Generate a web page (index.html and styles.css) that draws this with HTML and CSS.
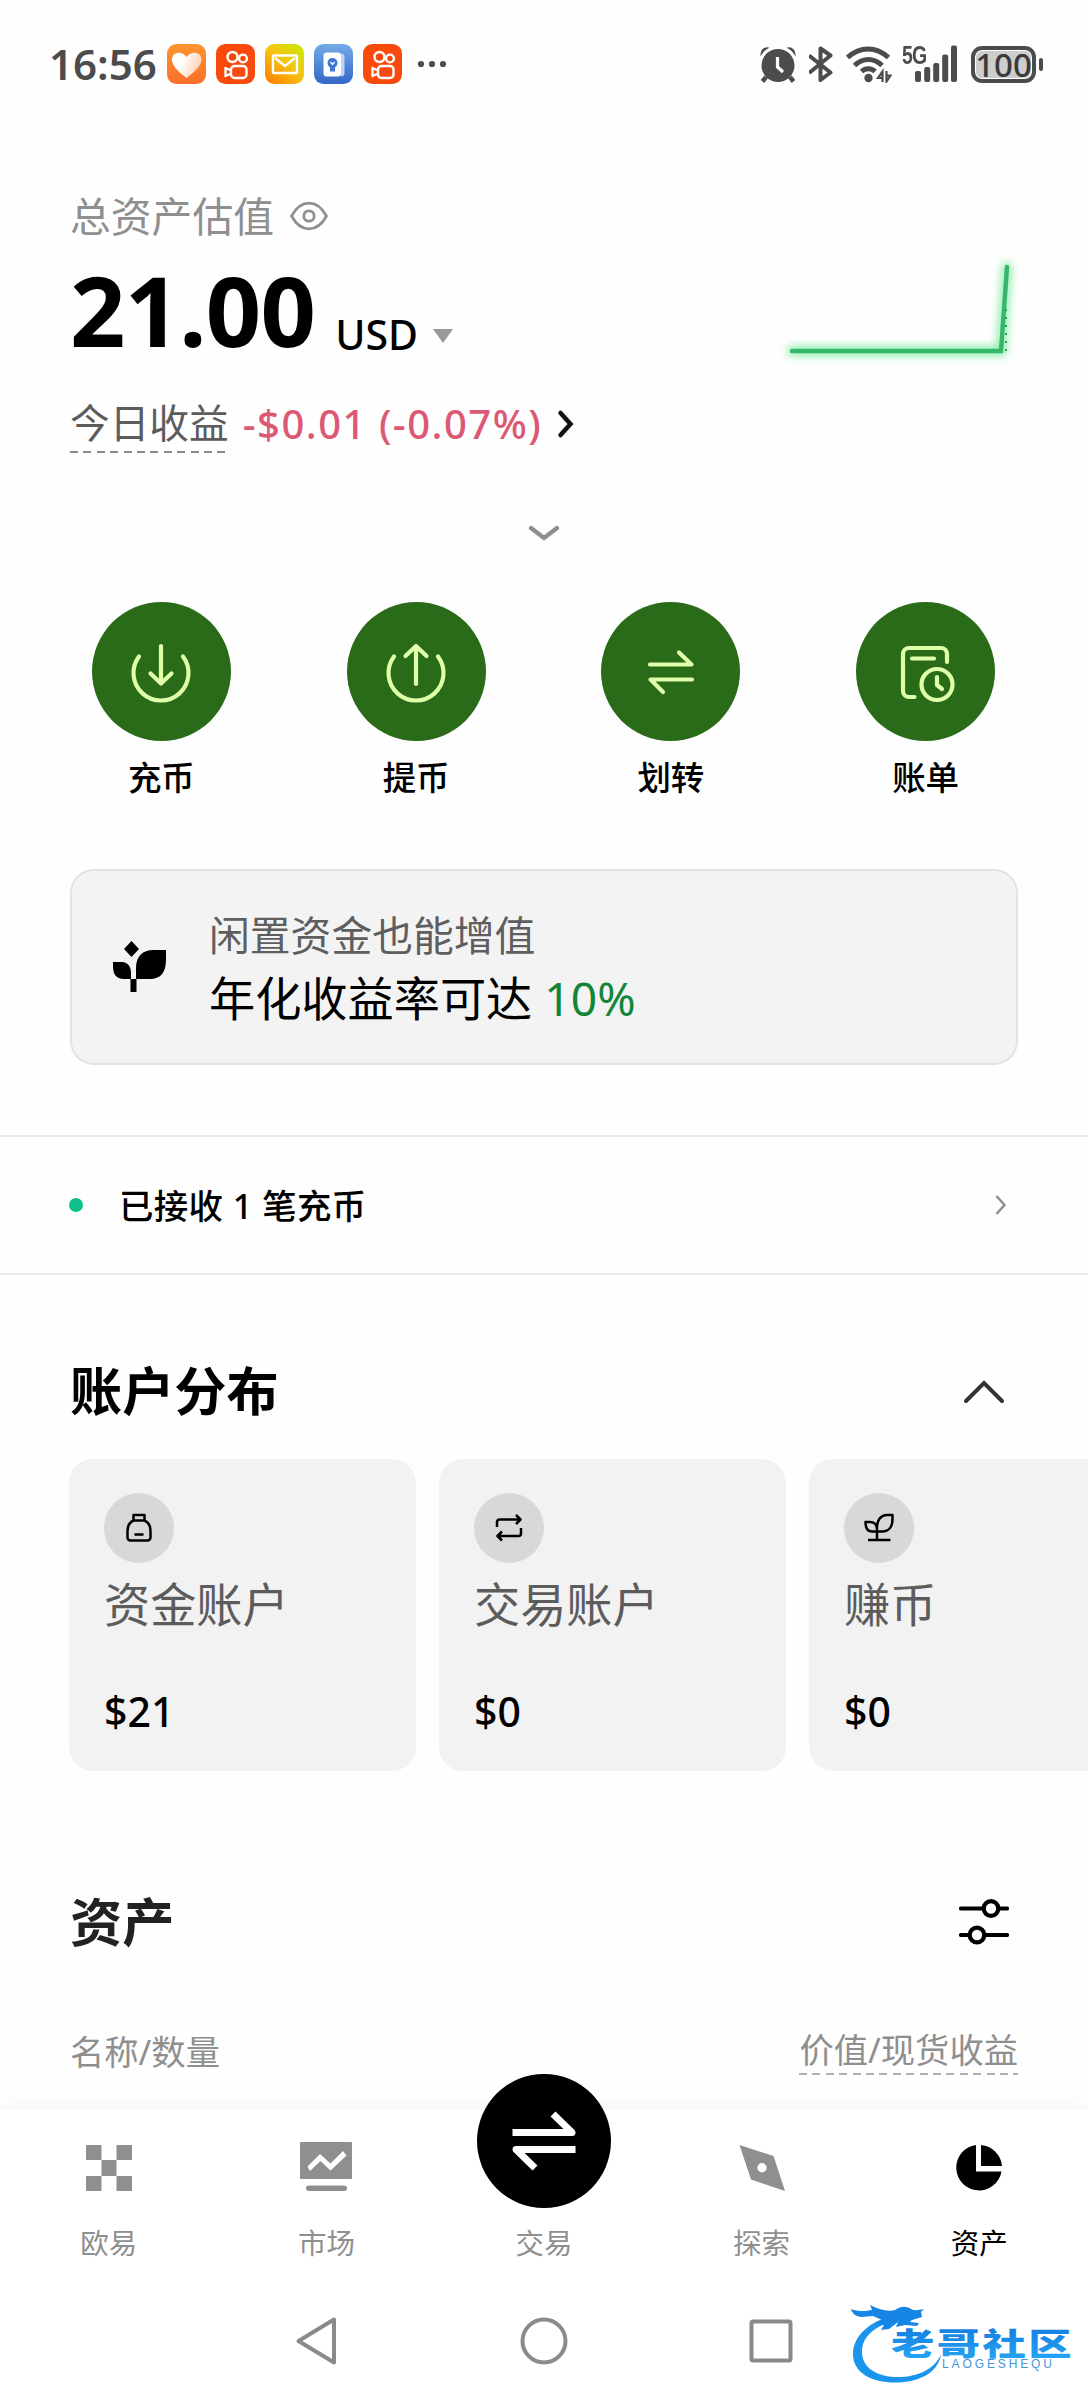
FILE: index.html
```html
<!DOCTYPE html>
<html lang="zh-CN">
<head>
<meta charset="utf-8">
<title>资产</title>
<link rel="stylesheet" href="styles.css">
</head>
<body>
<svg width="0" height="0" class="defs">
  <defs>
    <linearGradient id="gHeart" x1="0" y1="0" x2="0" y2="1"><stop offset="0" stop-color="#ff9430"/><stop offset="1" stop-color="#f9702a"/></linearGradient>
    <linearGradient id="gMail" x1="1" y1="0" x2="0.2" y2="1"><stop offset="0" stop-color="#c8ea00"/><stop offset="0.5" stop-color="#f5c614"/><stop offset="1" stop-color="#ff8400"/></linearGradient>
    <linearGradient id="gBook" x1="0" y1="0" x2="0" y2="1"><stop offset="0" stop-color="#74aae8"/><stop offset="1" stop-color="#3267c8"/></linearGradient>
    <linearGradient id="gLogo" x1="0" y1="0" x2="0" y2="1"><stop offset="0" stop-color="#1273dc"/><stop offset="1" stop-color="#27a9f5"/></linearGradient>
    <linearGradient id="gPetal" x1="0" y1="0" x2="1" y2="0.4"><stop offset="0.4" stop-color="#fff"/><stop offset="1" stop-color="#ffd3b5"/></linearGradient>
    <g id="kwai">
      <rect width="39" height="40" rx="9.500" fill="#f84a0c"/>
      <g fill="none" stroke="#fff" stroke-width="2.400" stroke-linejoin="round">
        <circle cx="16.500" cy="13" r="5"/><circle cx="27" cy="14.500" r="3.900"/>
        <rect x="15" y="22" width="15.500" height="12" rx="3.500"/><path d="M15 26.500 9.500 24v8l5.500-2.500"/>
      </g>
    </g>
  </defs>
</svg>

<header class="status">
  <span class="clock">16:56</span>
  <div class="apps">
    <svg width="39" height="40" viewBox="0 0 39 40"><rect width="39" height="40" rx="9.500" fill="url(#gHeart)"/><path d="M19.500 34C13 29 5 22 5 15.500 5 8.500 14 6 19.500 13 25 6 34.500 8.500 34.500 15.500 34.500 22 26 29 19.500 34z" fill="url(#gPetal)"/></svg>
    <svg width="39" height="40" viewBox="0 0 39 40"><use href="#kwai"/></svg>
    <svg width="39" height="40" viewBox="0 0 39 40"><rect width="39" height="40" rx="9.500" fill="url(#gMail)"/><g fill="none" stroke="#fff" stroke-width="2.400"><rect x="8" y="11.500" width="24" height="17.500" rx="1"/><path d="m10 14 10 8 10-8"/></g></svg>
    <svg width="39" height="40" viewBox="0 0 39 40"><rect width="39" height="40" rx="9.500" fill="url(#gBook)"/><path d="M27 9.500a3 3 0 0 1 3.500 3v17a3 3 0 0 1-3.500 3z" fill="#bcd4f5"/><rect x="9.500" y="8.500" width="17.500" height="24" rx="3" fill="#fff"/><circle cx="18.500" cy="19" r="5" fill="#3f77d2"/><path d="M16 23h5v4.500h-5z" fill="#3f77d2"/><path d="m16.500 18 2 2.500 2-2.500" fill="none" stroke="#fff" stroke-width="1.300"/></svg>
    <svg width="39" height="40" viewBox="0 0 39 40"><use href="#kwai"/></svg>
  </div>
  <svg class="more" width="30" height="8" viewBox="0 0 30 8" fill="#4c4c4c"><circle cx="4" cy="4" r="3.100"/><circle cx="15" cy="4" r="3.100"/><circle cx="26" cy="4" r="3.100"/></svg>
  <div class="system">
    <svg width="36" height="38" viewBox="0 0 36 38"><circle cx="18" cy="20.500" r="16.500" fill="#4c4c4c"/><path d="m6 32-3.500 4.500M30 32l3.500 4.500" stroke="#4c4c4c" stroke-width="4.500"/><path d="M.5 11.500C0 4 5 1 9.500 2.800 5.500 4.500 3 7 .5 11.500zM35.500 11.500C36 4 31 1 26.500 2.800 30.500 4.500 33 7 35.500 11.500z" fill="#4c4c4c"/><path d="M17.500 12v10l5.500 5" fill="none" stroke="#fff" stroke-width="3.200"/></svg>
    <svg class="bt" width="24" height="38" viewBox="0 0 24 38" fill="none" stroke="#4c4c4c" stroke-width="4" stroke-linejoin="round"><path d="m0 10.500 21.500 17L11.500 35V3.500l10 7L0 28"/></svg>
    <svg class="wifi" width="46" height="38" viewBox="0 0 46 38" fill="none" stroke="#4c4c4c" stroke-width="5"><path d="M1.500 12.500C14 1 30 1 42.500 12.500M8.500 20.500C17 12.500 28 12.500 36 20.500M15.500 26.500C19.500 22.800 25.500 22.800 29 26.500"/><circle cx="22.500" cy="33" r="4.200" fill="#4c4c4c" stroke="none"/><path d="M36.500 37V26.500L32 33h4.500M40.500 26v10.500l4-6h-4" stroke-width="2.200"/></svg>
    <div class="signal">
      <span class="net">5G</span>
      <svg width="57" height="38" viewBox="0 0 57 38" fill="#4c4c4c"><rect x="13" y="26" width="6" height="11" rx="2"/><rect x="22.200" y="22" width="6" height="15" rx="2"/><rect x="31.200" y="18" width="6" height="19" rx="2"/><rect x="40.200" y="9.500" width="6" height="27.500" rx="2"/><rect x="49" y="0.500" width="6" height="36.500" rx="2"/></svg>
    </div>
    <div class="battery"><span class="cell">100</span><i class="nub"></i></div>
  </div>
</header>

<main class="page">
  <section class="hero">
    <div class="summary">
      <div class="hero-label">总资产估值
        <svg width="38" height="30" viewBox="0 0 38 30" fill="none" stroke="#8f8f8f" stroke-width="2.700"><path d="M1.500 15C11-2.200 27-2.200 36.500 15 27 32.200 11 32.200 1.500 15z" stroke-linejoin="round"/><circle cx="19" cy="15" r="5.200"/></svg>
      </div>
      <div class="balance"><strong>21.00</strong><span class="currency">USD</span><i class="caret"></i></div>
      <div class="pnl"><span class="dashed today">今日收益</span><span class="loss">-$0.01 (-0.07%)</span>
        <svg width="18" height="30" viewBox="0 0 18 30" fill="none" stroke="#111" stroke-width="4.500" stroke-linecap="round"><path d="m3.500 4 10 11-10 11"/></svg>
      </div>
    </div>
    <svg class="spark" width="248" height="130" viewBox="0 0 248 130" fill="none">
      <polyline class="glow" points="22,111 231,111 237,27" stroke="#79eb9d" stroke-width="10" stroke-linecap="round"/>
      <polyline points="22,111 231,111 237,27" stroke="#36b668" stroke-width="4.400" stroke-linecap="round"/>
      <path d="M236 69v42" stroke="#2f9e5b" stroke-width="2" stroke-dasharray="2 6"/>
    </svg>
  </section>

  <div class="expander"><svg width="34" height="20" viewBox="0 0 34 20" fill="none" stroke="#8f8f8f" stroke-width="4.400" stroke-linecap="round"><path d="m4 4 13 10L30 4"/></svg></div>

  <nav class="actions">
    <a class="action"><span class="disc"><svg width="64" height="64" viewBox="0 0 64 64"><path d="M10 16.500a27.500 27.500 0 1 0 44 0M32 6v37M21.500 33.500 32 43.500l10.500-10"/></svg></span>充币</a>
    <a class="action"><span class="disc"><svg width="64" height="64" viewBox="0 0 64 64"><path d="M10 16.500a27.500 27.500 0 1 0 44 0M32 44V6M21.500 16 32 6l10.500 10"/></svg></span>提币</a>
    <a class="action"><span class="disc"><svg width="64" height="64" viewBox="0 0 64 64"><path d="M11 24.500h41.500L40 12.500M53 39.500H11.500L24 52"/></svg></span>划转</a>
    <a class="action"><span class="disc"><svg width="64" height="64" viewBox="0 0 64 64"><path d="M20.500 57H15a6 6 0 0 1-6-6V14a6 6 0 0 1 6-6h32a6 6 0 0 1 6 6v8M18 18.500h22"/><circle cx="43" cy="44.500" r="15.500"/><path d="M43 37v8l5 4"/></svg></span>账单</a>
  </nav>

  <section class="earn">
    <svg width="54" height="52" viewBox="0 0 54 52"><path d="M0 21h9c6 0 9 5 9 11v6H11C3 38 0 33 0 25zM23 38V27c0-12 7-18 17-18h13v10c0 13-6 19-16 19zM17.500 38h6v13h-6z"/><path d="M18.500 0 26 8l-7.500 8L11 8z"/></svg>
    <div class="earn-text">
      <div class="earn-sub">闲置资金也能增值</div>
      <div class="earn-main">年化收益率可达 <em>10%</em></div>
    </div>
  </section>

  <a class="notice"><i class="dot"></i><span>已接收 1 笔充币</span><svg width="14" height="24" viewBox="0 0 14 24" fill="none" stroke="#8f8f8f" stroke-width="2.500"><path d="m2.500 3 8 9-8 9"/></svg></a>

  <section class="accounts">
    <div class="section-head"><h2>账户分布</h2><svg width="46" height="30" viewBox="0 0 46 30" fill="none" stroke="#333" stroke-width="4" stroke-linecap="round"><path d="M5 25 23 7l18 18"/></svg></div>
    <div class="cards">
      <article class="card"><span class="badge"><svg width="30" height="30" viewBox="0 0 30 30"><path d="M9.500 2h11v5.500h-11zM9.500 7.500C6 9 3.500 13 3.500 18v6.500a3 3 0 0 0 3 3h17a3 3 0 0 0 3-3V18c0-5-2.500-9-6-10.500M10.500 21.500h9"/></svg></span><h3>资金账户</h3><b>$21</b></article>
      <article class="card"><span class="badge"><svg width="30" height="30" viewBox="0 0 30 30"><path d="M3 14V9a2.500 2.500 0 0 1 2.500-2.500H26M22 2l4.500 4.500L22 11M27 15v5.500a2.500 2.500 0 0 1-2.500 2.500H4M8 18.500 3.500 23 8 27.500"/></svg></span><h3>交易账户</h3><b>$0</b></article>
      <article class="card"><span class="badge"><svg width="30" height="30" viewBox="0 0 30 30"><path d="M13 18.500V14c0-7 4-12 10-12h5.500v4c0 8-4 12.500-10 12.500zM13 18.500H8C3.500 18.500 1.500 15 1.500 9H6c4 0 7 2.500 7 7M13 18v9M4 27h22.500"/></svg></span><h3>赚币</h3><b>$0</b></article>
    </div>
  </section>

  <section class="assets">
    <div class="section-head assets-head"><h2>资产</h2><svg width="50" height="46" viewBox="0 0 50 46" fill="none" stroke="#000" stroke-width="4.200" stroke-linecap="round"><path d="M2 9.500h21M41 9.500h7M2 36h7M27 36h21"/><circle cx="32" cy="9.500" r="7.300"/><circle cx="18" cy="36" r="7.300"/></svg></div>
    <div class="columns"><span class="name-col">名称/数量</span><span class="dashed pale">价值/现货收益</span></div>
  </section>
</main>

<nav class="tabs">
  <a class="tab"><svg width="52" height="52" viewBox="0 0 52 52"><path d="M3 3h15.500v15H3zM33.500 3H49v15H33.500zM18.500 18h15v16h-15zM3 34h15.500v15H3zM33.500 34H49v15H33.500z"/></svg>欧易</a>
  <a class="tab"><svg width="52" height="52" viewBox="0 0 52 52"><path fill-rule="evenodd" d="M1 0h50a1 1 0 0 1 1 1v35a1 1 0 0 1-1 1H1a1 1 0 0 1-1-1V1a1 1 0 0 1 1-1zM7.500 24.500 20 12l10.500 9.500L43 9l3.500 4.500L30.500 28.500 20.500 19 10 29z"/><rect x="6" y="43.500" width="41" height="5.500" rx="2.700"/></svg>市场</a>
  <a class="tab"><span class="trade"><svg width="74" height="66" viewBox="0 0 74 66" fill="none" stroke="#fff" stroke-width="7" stroke-linejoin="round"><path d="M5.500 24.500H65L46 6M68.500 41.500H9L28 60"/></svg></span>交易</a>
  <a class="tab"><svg width="52" height="52" viewBox="0 0 52 52"><path fill-rule="evenodd" d="m3.500 3 34 11L49 49 15 37.500zM26 21a4.700 4.700 0 1 0 0 9.400 4.700 4.700 0 0 0 0-9.400z"/></svg>探索</a>
  <a class="tab active"><svg width="52" height="52" viewBox="0 0 52 52"><path d="M23 3v26.500h25.500A22.800 22.800 0 1 1 23 3z"/><path d="M28 3a23 23 0 0 1 21 21H28z"/></svg>资产</a>
</nav>

<footer class="sysnav">
  <svg width="46" height="52" viewBox="0 0 46 52"><path d="M4.500 26 40 4.500v43z"/></svg>
  <svg width="50" height="50" viewBox="0 0 50 50"><circle cx="25" cy="25" r="21.500"/></svg>
  <svg width="46" height="46" viewBox="0 0 46 46"><rect x="3.500" y="3.500" width="39" height="39" rx="1.500"/></svg>
</footer>

<svg class="watermark" width="239" height="96" viewBox="0 0 239 96">
  <path d="M47 16C21 21 4 37 4 55c0 22 25 31 51 28 20-2 35-12 37-28-5 13-20 22-39 23-23 1-40-8-40-25 0-16 13-26 35-32z" fill="#1b94ee"/>
  <path d="M2 10c7 3 15 2 21 1l-2-5c8 4 17 7 25 5 7-5 13-3 16-1 4 2 8 1 13 0l-3 3 1 5c-6 2-10 2-12 5l9 1-2 3-12-1-9 2 2-5-9 7-8 1 3-5-9-2 7-3-9-4-11 1C8 18 3 15 2 10z" fill="#1785e4"/>
  <text class="wm-name" transform="translate(42 55.500) scale(1.400 1)" fill="url(#gLogo)" textLength="129">老哥社区</text>
  <text class="wm-sub" x="93" y="69" textLength="110">LAOGESHEQU</text>
</svg>
</body>
</html>
```
FILE: styles.css
```css
* { box-sizing: border-box; }

body {
  margin: 0;
  width: 1088px;
  height: 2400px;
  position: relative;
  overflow: hidden;
  background: #fefefe;
  color: #000;
  font-family: "Noto Sans", "Noto Sans CJK SC", sans-serif;
}

svg { display: block; flex: none; }
.defs { position: absolute; }
h2, h3 { margin: 0; }

/* status bar */
.status {
  display: flex;
  align-items: center;
  height: 128px;
  padding: 0 45px 0 49px;
  color: #4c4c4c;
}
.clock { width: 118px; font-size: 42px; font-weight: 600; line-height: 50px; }
.apps { display: flex; gap: 10px; }
.more { margin-left: 15px; }
.system { display: flex; align-items: center; margin-left: auto; height: 38px; }
.bt { margin-left: 13px; }
.wifi { margin-left: 13px; }
.signal { position: relative; margin-left: 10px; }
.net {
  position: absolute;
  left: 0;
  top: 0;
  font-family: "Liberation Sans", sans-serif;
  font-size: 25px;
  font-weight: 700;
  line-height: 20px;
  letter-spacing: -1px;
  transform: scaleX(.78);
  transform-origin: left;
}
.battery { display: flex; align-items: center; gap: 3px; margin-left: 12px; }
.cell {
  width: 65px;
  height: 37px;
  border: 4px solid #4c4c4c;
  border-radius: 11px;
  background: #cdcdcd;
  box-shadow: inset 0 0 0 1px #fff;
  color: #3a3a3a;
  font-size: 33px;
  font-weight: 500;
  line-height: 29px;
  text-align: center;
}
.nub { width: 4px; height: 13px; border-radius: 2px; background: #4c4c4c; }

/* balance */
.hero {
  display: flex;
  justify-content: space-between;
  height: 324px;
  padding: 62px 70px 0;
}
.hero-label {
  display: flex;
  align-items: center;
  gap: 16px;
  height: 52px;
  color: #8f8f8f;
  font-size: 40.8px;
  line-height: 52px;
}
.balance { display: flex; align-items: flex-end; height: 98px; margin-top: 18px; }
.balance strong { font-size: 97px; font-weight: 700; line-height: 98px; letter-spacing: -.8px; }
.currency { margin: 0 0 3px 20px; font-size: 41px; font-weight: 500; line-height: 41px; }
.caret {
  margin: 0 0 15px 15px;
  border: 10px solid transparent;
  border-top: 14px solid #999;
  border-bottom: 0;
}
.pnl { display: flex; align-items: center; height: 58px; margin-top: 37px; font-size: 39.7px; line-height: 56px; white-space: nowrap; }
.dashed {
  padding-bottom: 2px;
  background: repeating-linear-gradient(90deg, #8a8a8a 0 8px, transparent 8px 13.4px) 0 100% / 100% 2px no-repeat;
}
.today { color: #5c5c5c; }
.loss { margin: 0 15px 0 14px; color: #dc5976; font-weight: 500; font-size: 40px; letter-spacing: 1.5px; }
.spark { margin-top: 50px; overflow: visible; }
.glow { filter: blur(4px); opacity: .85; }

.expander { display: flex; justify-content: center; height: 150px; padding-top: 72px; }

/* quick actions */
.actions { display: grid; grid-template-columns: repeat(4, 1fr); height: 267px; padding: 0 35px 0 34px; }
.action { display: flex; flex-direction: column; align-items: center; font-size: 33.5px; font-weight: 500; line-height: 72px; }
.disc { display: grid; place-items: center; width: 139px; height: 139px; border-radius: 50%; background: #2a6b19; }
.disc svg { fill: none; stroke: #dfffa8; stroke-width: 4.200; stroke-linecap: round; stroke-linejoin: round; }

/* earn banner */
.earn {
  display: flex;
  align-items: center;
  gap: 42px;
  height: 196px;
  margin: 0 70px;
  padding-left: 41px;
  border: 2px solid #e3e3e3;
  border-radius: 24px;
  background: #f3f3f3;
}
.earn-text { padding-top: 3px; }
.earn-sub { color: #5e5e5e; font-size: 40.8px; line-height: 60px; }
.earn-main { font-size: 46.2px; line-height: 67px; }
.earn-main em { color: #128539; font-style: normal; }

/* deposit notice */
.notice {
  display: flex;
  align-items: center;
  height: 140px;
  margin-top: 70px;
  padding: 0 80px 0 69px;
  border: solid #ebebeb;
  border-width: 2px 0;
  font-size: 34.4px;
  font-weight: 500;
  letter-spacing: .4px;
}
.notice span { flex: 1; margin: -2px 0 0 36px; }
.dot { width: 14px; height: 14px; border-radius: 50%; background: #0dbf8b; }

/* accounts */
.section-head { display: flex; align-items: center; justify-content: space-between; padding: 0 81px 0 70px; }
.section-head h2 { font-size: 52.2px; font-weight: 700; line-height: 72px; }
.accounts { padding-top: 80px; }
.cards { display: flex; gap: 23px; padding: 32px 0 0 69px; overflow: hidden; }
.card { flex: none; width: 347px; height: 312px; padding: 34px 35px; border-radius: 24px; background: #f2f2f2; }
.badge { display: grid; place-items: center; width: 70px; height: 70px; border-radius: 50%; background: #d8d8d8; }
.badge svg { fill: none; stroke: #000; stroke-width: 2.500; stroke-linejoin: round; }
.card h3 { margin-top: 10px; color: #5c5c5c; font-size: 46.2px; font-weight: 400; line-height: 64px; }
.card b { display: block; margin-top: 46px; font-size: 41px; font-weight: 500; line-height: 56px; }

/* assets */
.assets { height: 338px; padding-top: 115px; }
.assets-head { padding-right: 79px; }
.assets-head h2 { color: #222; }
.columns { display: flex; justify-content: space-between; align-items: flex-start; margin-top: 69px; padding: 0 70px; color: #8f8f8f; font-size: 34.3px; line-height: 46px; }
.name-col { padding-top: 2px; }
.pale { background-image: repeating-linear-gradient(90deg, #b0b0b0 0 8px, transparent 8px 13.4px); }

/* tab bar */
.tabs {
  display: grid;
  grid-template-columns: repeat(5, 1fr);
  height: 170px;
  background: #fff;
  box-shadow: 0 -2px 14px rgba(0, 0, 0, .045);
}
.tab { display: flex; flex-direction: column; align-items: center; padding-top: 33px; color: #8f8f8f; font-size: 28.5px; line-height: 40px; }
.tab > svg { margin-bottom: 29px; fill: #8f8f8f; }
.trade { display: grid; place-items: center; width: 134px; height: 134px; margin: -68px 0 15px; border-radius: 50%; background: #000; }
.active { color: #000; }
.tab.active > svg { fill: #000; }

/* system navigation */
.sysnav { display: flex; align-items: center; height: 120px; padding: 4px 0 0 294px; background: #fff; }
.sysnav svg { fill: none; stroke: #8a8a8a; stroke-width: 4; stroke-linejoin: round; }
.sysnav svg + svg { margin-left: 179px; }

/* watermark laid over the bottom corner */
.watermark { position: absolute; left: 849px; top: 2299px; }
.wm-name { font-family: "Noto Sans CJK SC", sans-serif; font-size: 31px; font-weight: 900; }
.wm-sub { font-family: "Liberation Sans", sans-serif; font-size: 12px; fill: #4595d6; }
```
